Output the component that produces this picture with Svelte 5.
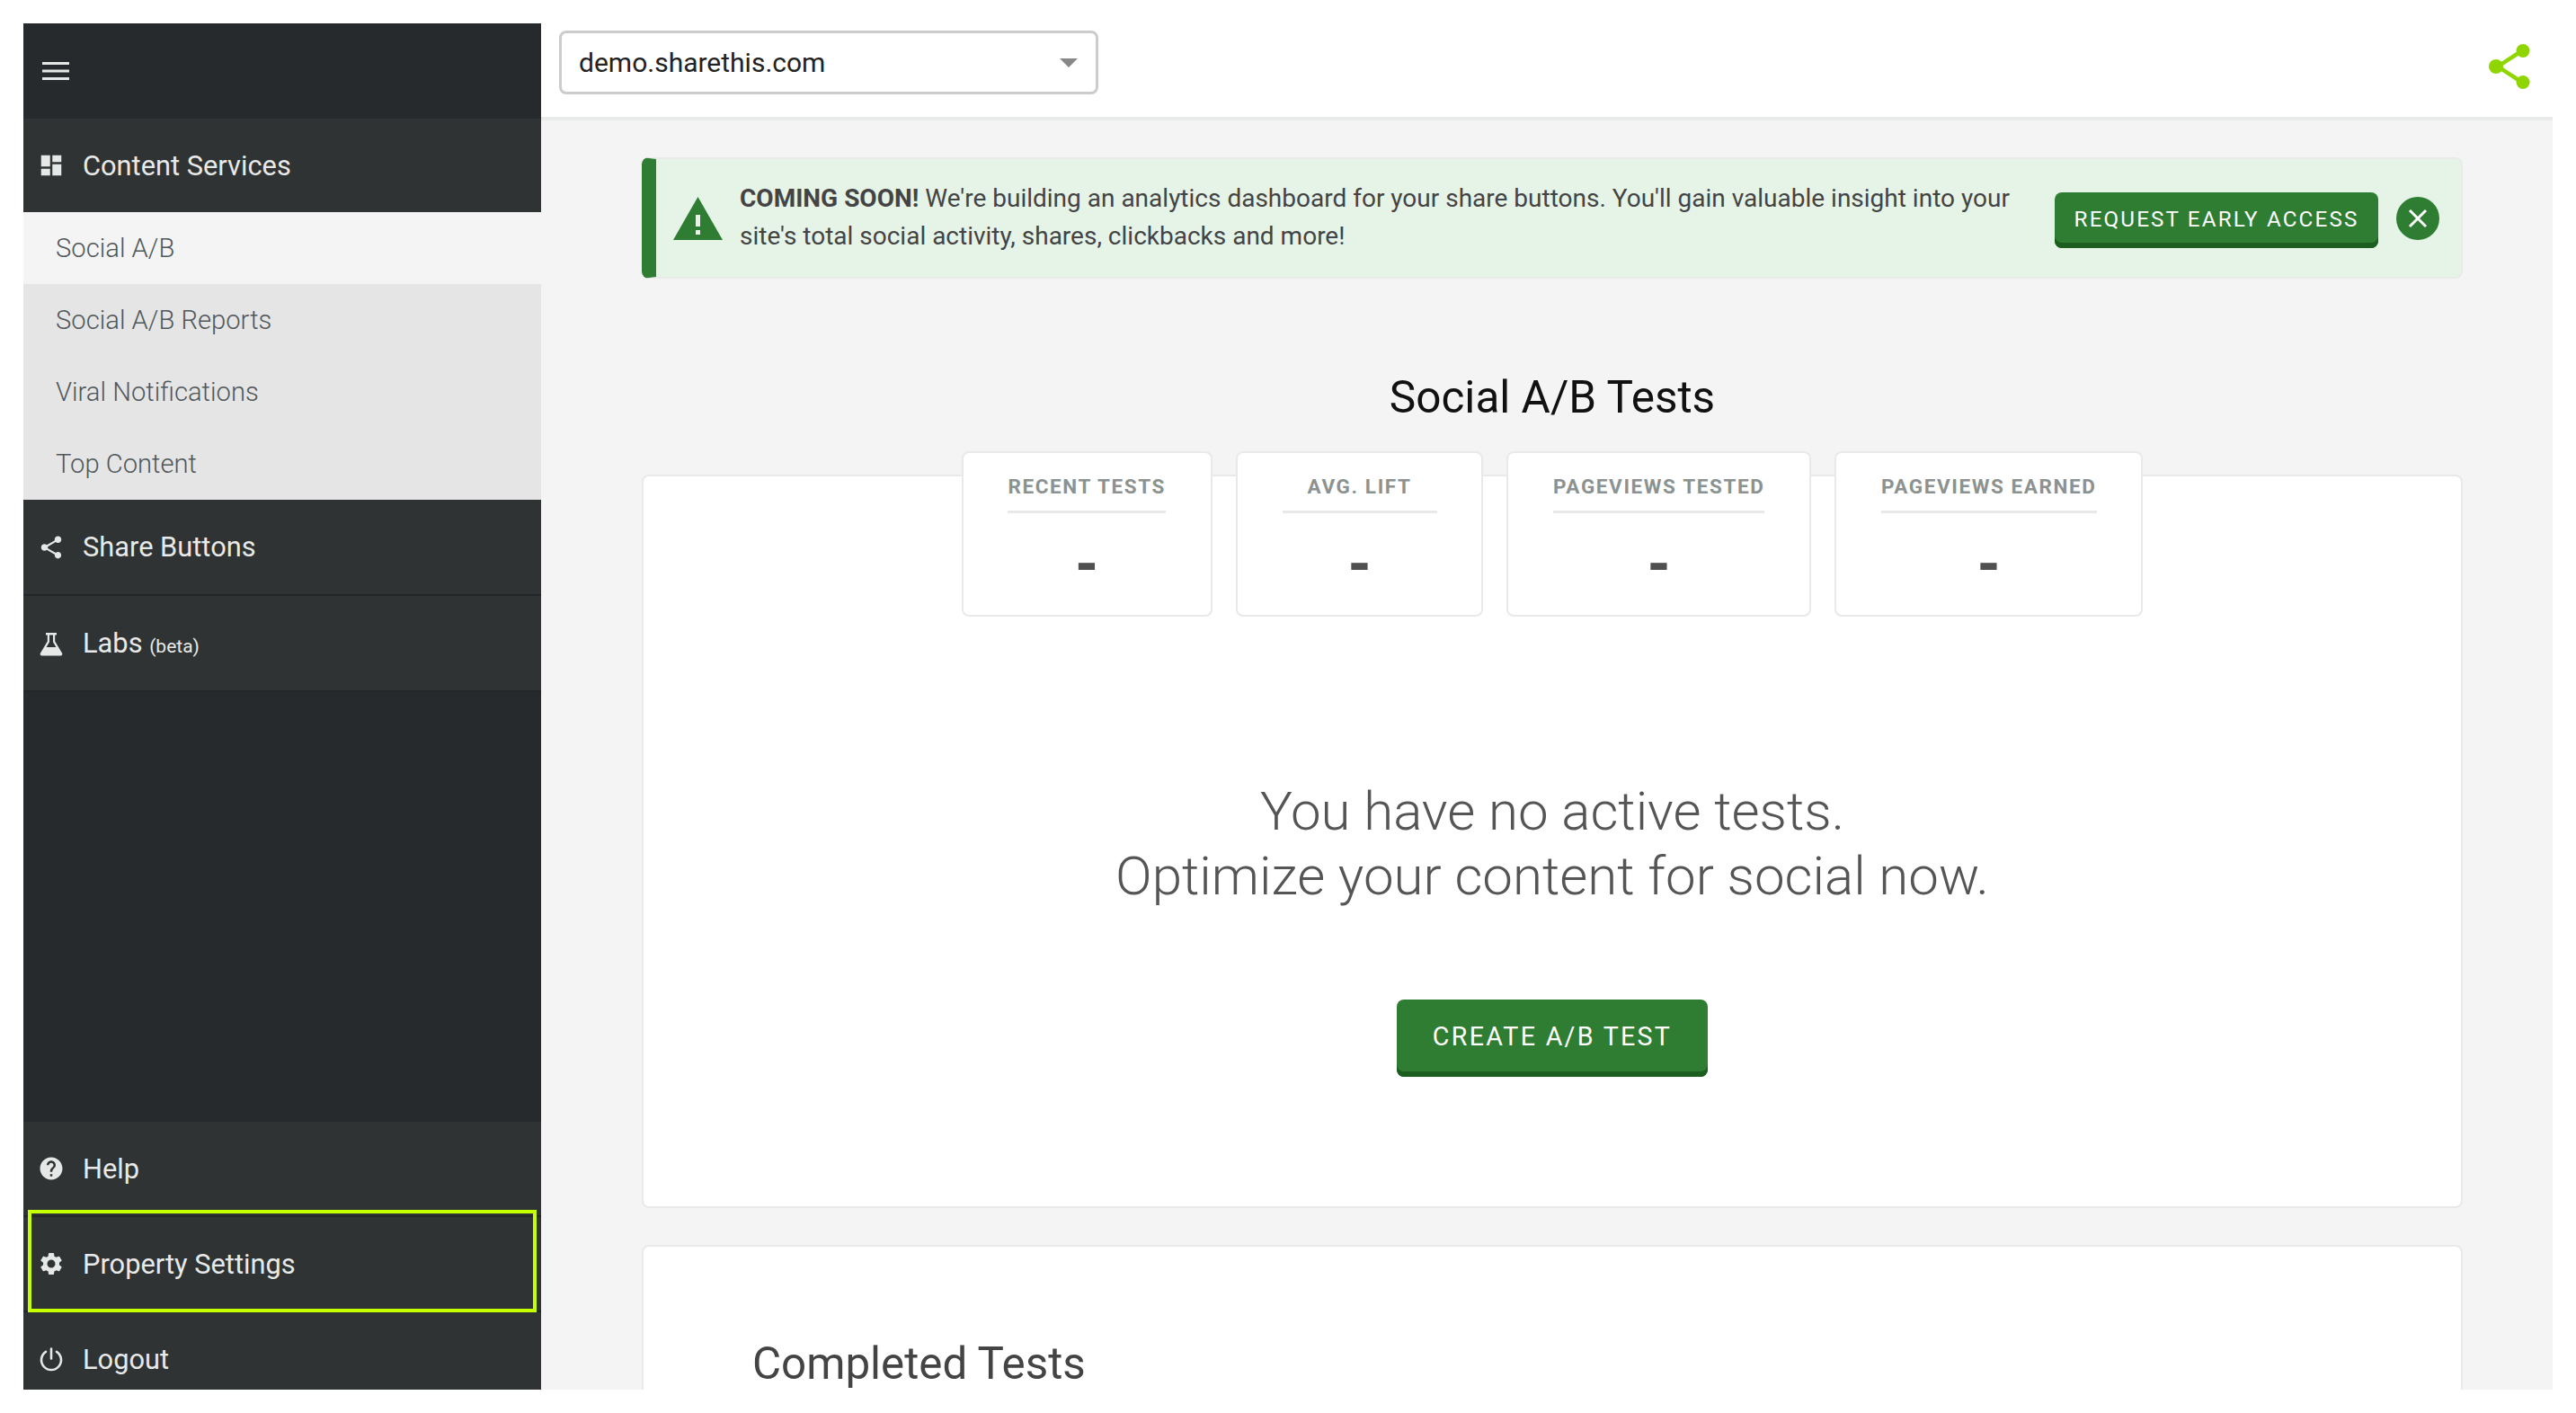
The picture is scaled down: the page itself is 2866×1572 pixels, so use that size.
<script>
  const sub = ['Social A/B', 'Social A/B Reports', 'Viral Notifications', 'Top Content'];
  const stats = [
    { label: 'RECENT TESTS', value: '-' },
    { label: 'AVG. LIFT', value: '-' },
    { label: 'PAGEVIEWS TESTED', value: '-' },
    { label: 'PAGEVIEWS EARNED', value: '-' }
  ];
  const share = 'M18 16.08c-.76 0-1.44.3-1.96.77L8.91 12.7c.05-.23.09-.46.09-.7s-.04-.47-.09-.7l7.05-4.11c.54.5 1.25.81 2.04.81 1.66 0 3-1.34 3-3s-1.34-3-3-3-3 1.34-3 3c0 .24.04.47.09.7L8.04 9.81C7.5 9.31 6.79 9 6 9c-1.66 0-3 1.34-3 3s1.34 3 3 3c.79 0 1.5-.31 2.04-.81l7.12 4.16c-.05.21-.08.43-.08.65 0 1.61 1.31 2.92 2.92 2.92 1.61 0 2.92-1.31 2.92-2.92s-1.31-2.92-2.92-2.92z';
</script>

<div class="app">
  <aside class="side">
    <div class="burger">
      <svg viewBox="0 0 30 20" width="30" height="20"><path d="M0 0h30v3H0zM0 8.500h30v3H0zM0 17h30v3H0z" fill="#e6e7e7"/></svg>
    </div>
    <div class="row first">
      <svg class="ic" viewBox="0 0 24 24"><path d="M3 13h8V3H3v10zm0 8h8v-6H3v6zm10 0h8V11h-8v10zm0-18v6h8V3h-8z"/></svg>
      <span>Content Services</span>
    </div>
    <ul class="sub">
      {#each sub as s, i}
        <li class:active={i === 0}>{s}</li>
      {/each}
    </ul>
    <div class="row tall">
      <svg class="ic" viewBox="0 0 24 24"><path d={share}/></svg>
      <span>Share Buttons</span>
    </div>
    <div class="row tall">
      <svg class="ic" viewBox="0 0 30 30"><path d="M9 3h12v2.4h-1.8v7.2L27 25.6c.9 1.5 0 2.9-1.6 2.9H4.6c-1.6 0-2.5-1.4-1.6-2.9l7.800-13V5.400H9zM13 5.400v7.900L9.600 19h10.800L17 13.300V5.400z" fill-rule="evenodd"/></svg>
      <span>Labs <small>(beta)</small></span>
    </div>
    <div class="spacer"></div>
    <div class="row">
      <svg class="ic" viewBox="0 0 24 24"><path d="M12 2C6.480 2 2 6.480 2 12s4.480 10 10 10 10-4.480 10-10S17.520 2 12 2zm1 17h-2v-2h2v2zm2.070-7.750l-.9.920C13.450 12.900 13 13.500 13 15h-2v-.5c0-1.100.450-2.100 1.170-2.830l1.240-1.260c.370-.360.590-.860.590-1.410 0-1.100-.9-2-2-2s-2 .9-2 2H8c0-2.210 1.790-4 4-4s4 1.790 4 4c0 .880-.360 1.680-.930 2.250z"/></svg>
      <span>Help</span>
    </div>
    <div class="row focus">
      <svg class="ic" viewBox="0 0 24 24"><path d="M19.140 12.940c.04-.3.060-.61.060-.94 0-.32-.02-.64-.07-.94l2.030-1.580c.18-.14.230-.41.120-.61l-1.920-3.320c-.12-.22-.37-.29-.59-.22l-2.390.96c-.5-.38-1.030-.7-1.620-.94L14.400 2.810c-.04-.24-.24-.41-.48-.41h-3.840c-.24 0-.43.170-.47.410L9.250 5.350c-.59.240-1.130.570-1.620.940l-2.390-.96c-.22-.08-.47 0-.59.220L2.740 8.870c-.12.210-.08.470.12.610l2.030 1.580c-.05.3-.09.630-.09.940s.02.640.07.940l-2.030 1.580c-.18.140-.23.410-.12.610l1.920 3.320c.12.220.37.290.59.220l2.390-.96c.5.380 1.030.7 1.620.940l.36 2.540c.05.240.24.410.48.410h3.840c.24 0 .44-.17.47-.41l.36-2.540c.59-.24 1.130-.56 1.620-.94l2.390.96c.22.080.47 0 .59-.22l1.920-3.320c.12-.22.070-.47-.12-.61l-2.010-1.580zM12 15.600c-1.980 0-3.600-1.620-3.600-3.600s1.620-3.600 3.600-3.600 3.600 1.620 3.600 3.600-1.620 3.600-3.600 3.600z"/></svg>
      <span>Property Settings</span>
    </div>
    <div class="row">
      <svg class="ic" viewBox="0 0 30 30"><path d="M15 3.500v11M9 6.800a11 11 0 1 0 12 0" fill="none" stroke="#e6e7e7" stroke-width="2.600" stroke-linecap="round"/></svg>
      <span>Logout</span>
    </div>
  </aside>

  <main class="main">
    <header class="top">
      <div class="select">
        <span>demo.sharethis.com</span>
        <i class="caret"></i>
      </div>
      <svg class="logo" viewBox="0 0 46 50" width="46" height="50">
        <path d="M36 8 10 25l26 17" fill="none" stroke="#8fd600" stroke-width="4.500"/>
        <ellipse cx="38" cy="7.500" rx="7.500" ry="7.500" fill="#8fd600"/>
        <ellipse cx="8" cy="25" rx="8" ry="8" fill="#8fd600"/>
        <ellipse cx="38" cy="42.500" rx="7.500" ry="7.500" fill="#8fd600"/>
      </svg>
    </header>

    <div class="content">
      <section class="banner">
        <svg class="warn" viewBox="0 0 55 48" width="55" height="48">
          <path d="M27.500 0 55 48H0z" fill="#2e7d32"/>
          <path d="M25 20h5v13h-5zM25 37h5v5h-5z" fill="#e6f4e8"/>
        </svg>
        <p><b>COMING SOON!</b> We're building an analytics dashboard for your share buttons. You'll gain valuable insight into your site's total social activity, shares, clickbacks and more!</p>
        <button class="btn small">REQUEST EARLY ACCESS</button>
        <span class="close">
          <svg viewBox="0 0 48 48" width="48" height="48"><path d="M15 15l18 18M33 15 15 33" stroke="#fff" stroke-width="3"/></svg>
        </span>
      </section>

      <h1>Social A/B Tests</h1>

      <section class="card">
        <div class="stats">
          {#each stats as st}
            <div class="stat">
              <div class="label">{st.label}</div>
              <div class="val">{st.value}</div>
            </div>
          {/each}
        </div>
        <p class="empty">You have no active tests.<br />Optimize your content for social now.</p>
        <button class="btn big">CREATE A/B TEST</button>
      </section>

      <section class="card second">
        <h2>Completed Tests</h2>
      </section>
    </div>
  </main>
</div>

<style>
  :global(body) { margin: 0; background: #fff; }
  .app {
    display: flex;
    width: 2814px;
    height: 1520px;
    margin: 26px 0 0 26px;
    overflow: hidden;
    font-family: Roboto, "Liberation Sans", sans-serif;
  }
  .side {
    flex: none;
    width: 576px;
    background: #272a2c;
    color: #e8e9e9;
    display: flex;
    flex-direction: column;
  }
  .burger { height: 106px; flex: none; padding-left: 21px; display: flex; align-items: center; box-sizing: border-box; }
  .row {
    flex: none;
    position: relative;
    height: 106px;
    box-sizing: border-box;
    background: #2f3333;
    border-bottom: 2px solid #232628;
    display: flex;
    align-items: center;
    gap: 20px;
    padding-left: 16px;
    font-size: 30.800px;
    font-weight: 400;
  }
  .row.first { height: 104px; border-bottom: 0; }
  .row.tall { height: 107px; }
  .ic { width: 30px; height: 30px; fill: #e6e7e7; flex: none; }
  small { font-size: 21px; }
  .focus::after {
    content: '';
    position: absolute;
    left: 5px; right: 5px; top: -8px; bottom: -2px;
    border: 4px solid #c6ff00;
    pointer-events: none;
  }
  .sub { list-style: none; margin: 0; padding: 0; flex: none; background: #e5e5e5; }
  .sub li {
    height: 80px;
    line-height: 80px;
    padding-left: 36px;
    font-size: 29.200px;
    font-weight: 300;
    color: #50585b;
  }
  .sub li.active { background: #f4f4f4; }
  .spacer { flex: none; height: 478px; }

  .main { display: flex; flex-direction: column; width: 2238px; flex: none; }
  .top {
    flex: none;
    height: 108px;
    box-sizing: border-box;
    border-bottom: 4px solid #e9eaea;
    background: #fff;
    padding: 8px 25px 0 20px;
    display: flex;
    justify-content: space-between;
    align-items: flex-start;
  }
  .select {
    width: 600px;
    height: 71px;
    box-sizing: border-box;
    border: 3px solid #ccc;
    border-radius: 8px;
    display: flex;
    align-items: center;
    justify-content: space-between;
    padding: 0 20px 0 19px;
    font-size: 30px;
    color: #222;
  }
  .caret { width: 0; height: 0; border: 10px solid transparent; border-top: 10px solid #888; border-bottom: 0; }
  .logo { margin-top: 15px; }

  .content { flex: 1; background: #f4f4f4; padding: 41px 100px 0 112px; }
  .banner {
    height: 135px;
    box-sizing: border-box;
    display: flex;
    align-items: center;
    background: #e6f4e8;
    border: 2px solid #e8ebe8;
    border-left: 16px solid #2e7d32;
    border-radius: 8px;
    padding: 0 24px 0 19px;
  }
  .warn { flex: none; margin-right: 19px; }
  .banner p {
    flex: 1;
    margin: -2px 0 0;
    font-size: 28px;
    line-height: 42px;
    color: #444;
  }
  .btn {
    border: 0;
    font-family: inherit;
    color: #fff;
    background: #2e7d32;
    border-radius: 8px;
    box-shadow: inset 0 -6px 0 #1b5e20;
    flex: none;
  }
  .small { width: 360px; height: 62px; font-size: 24.200px; letter-spacing: 2.150px; padding: 0 0 2px; margin: 5px 0 0 50px; }
  .close {
    flex: none;
    width: 48px; height: 48px;
    margin-left: 20px;
    border-radius: 50%;
    background: #2e7d32;
    display: block;
  }
  .close svg { display: block; }
  h1 {
    margin: 0;
    height: 218px;
    box-sizing: border-box;
    padding-top: 96px;
    line-height: 72px;
    text-align: center;
    font-size: 49.500px;
    font-weight: 400;
    color: #111;
  }
  .card {
    height: 816px;
    box-sizing: border-box;
    background: #fff;
    border: 2px solid #e8e9e9;
    border-radius: 8px;
    text-align: center;
  }
  .stats { display: flex; justify-content: center; gap: 26px; margin-top: -28px; }
  .stat {
    background: #fff;
    border: 2px solid #e8e9e9;
    border-radius: 8px;
    height: 184px;
    box-sizing: border-box;
    padding: 0 49.750px;
  }
  .label {
    height: 67px;
    min-width: 172px;
    line-height: 41px;
    padding-top: 17px;
    box-sizing: border-box;
    border-bottom: 3px solid #e8e9e9;
    font-size: 22.500px;
    font-weight: 700;
    letter-spacing: 1.600px;
    color: #8b9290;
    white-space: nowrap;
  }
  .val { font-size: 62px; font-weight: 900; color: #505050; line-height: 114px; }
  .empty {
    margin: 181px 0 0;
    font-size: 60px;
    line-height: 72px;
    font-weight: 300;
    color: #555;
  }
  .big { display: block; margin: 101px auto 0; width: 346px; height: 86px; font-size: 28.600px; letter-spacing: 2.300px; padding: 0 0 4px; }
  .second { margin-top: 41px; height: 400px; }
  h2 {
    margin: 0;
    padding: 98px 0 0 121px;
    text-align: left;
    font-size: 49.300px;
    line-height: 64px;
    font-weight: 400;
    color: #444;
  }
</style>
